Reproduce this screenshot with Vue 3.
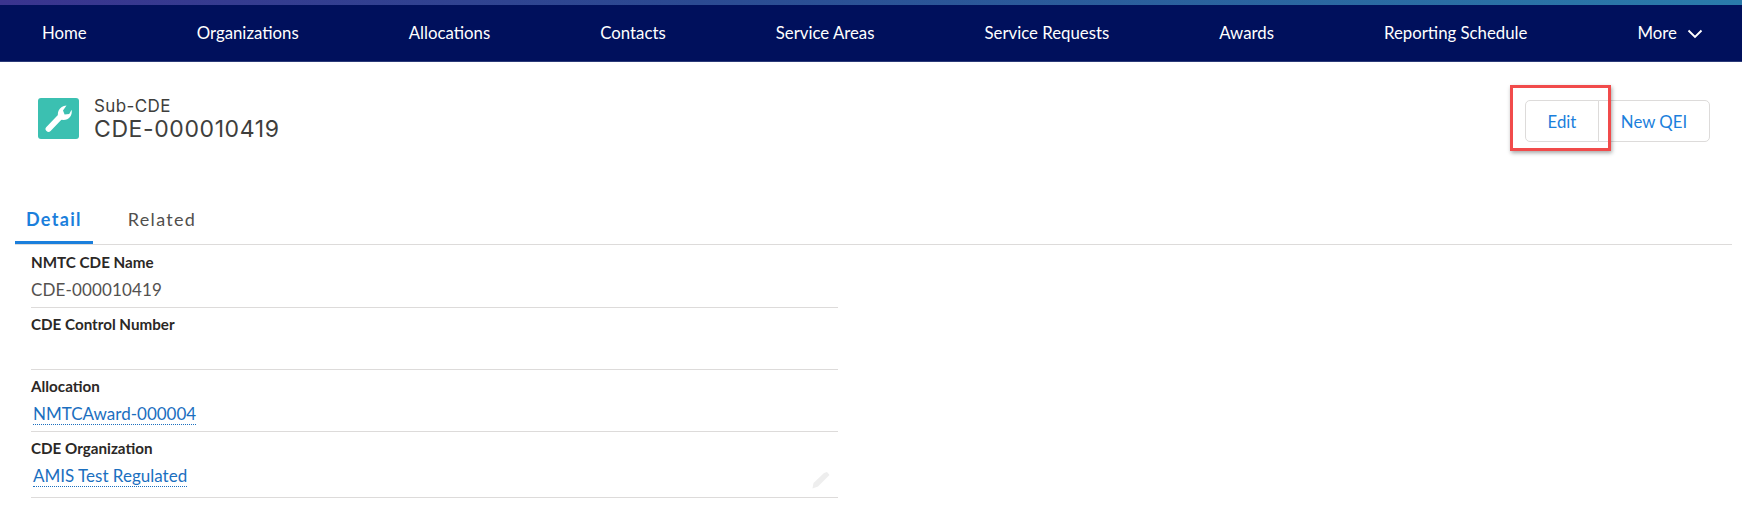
<script setup>
const navItems = ['Home', 'Organizations', 'Allocations', 'Contacts', 'Service Areas', 'Service Requests', 'Awards', 'Reporting Schedule']
const fields = [
  { label: 'NMTC CDE Name', value: 'CDE-000010419' },
  { label: 'CDE Control Number', value: '' },
  { label: 'Allocation', link: 'NMTCAward-000004' },
  { label: 'CDE Organization', link: 'AMIS Test Regulated', pencil: true },
]
</script>

<template>
  <div class="page">
    <div class="strip"></div>
    <nav class="nav">
      <a v-for="item in navItems" :key="item" class="nav-item">{{ item }}</a>
      <a class="nav-item more">
        More
        <svg class="chev" width="16" height="10" viewBox="0 0 16 10"><path d="M1.5 1.5 L8 8 L14.5 1.5" fill="none" stroke="#fff" stroke-width="1.9" /></svg>
      </a>
    </nav>

    <header class="head">
      <div class="title-wrap">
        <span class="icon">
          <svg width="41" height="41" viewBox="0 0 41 41">
            <path d="M10.5 31 L21.5 19.5" stroke="#fff" stroke-width="5.8" stroke-linecap="round" fill="none" />
            <path d="M21 21 C18 15 21 8.2 28.5 7.5 L25 12.5 L26.6 16.5 L31.2 16 L33.6 11.8 C35 19 28.5 24.5 21 21 Z" fill="#fff" />
          </svg>
        </span>
        <div class="titles">
          <div class="sub">Sub-CDE</div>
          <div class="name">CDE-000010419</div>
        </div>
      </div>
      <div class="btns">
        <button class="btn edit">Edit</button>
        <button class="btn qei">New QEI</button>
        <span class="callout"></span>
      </div>
    </header>

    <div class="tabs">
      <span class="tab active">Detail</span>
      <span class="tab">Related</span>
    </div>

    <section class="fields">
      <div v-for="f in fields" :key="f.label" class="field">
        <div class="label">{{ f.label }}</div>
        <div class="value">
          <a v-if="f.link" class="link">{{ f.link }}</a>
          <template v-else>{{ f.value }}</template>
        </div>
        <svg v-if="f.pencil" class="pencil" width="18" height="18" viewBox="0 0 18 18"><path d="M0.5 17.5 L1.5 12 L12 2 L15 1 L17.5 4 L6 15.5 Z" fill="#eeeeee" /></svg>
      </div>
    </section>
  </div>
</template>

<style scoped>
.page {
  width: 1742px;
  height: 514px;
  overflow: hidden;
  background: #fff;
  font-family: Lato, "Liberation Sans", sans-serif;
  color: #2b2826;
}
.strip {
  height: 5px;
  background: linear-gradient(90deg, #3a348f 0%, #2b4a92 40%, #2a7bab 100%);
}
.nav {
  height: 56px;
  padding: 0 39px 0 42px;
  display: flex;
  align-items: center;
  justify-content: space-between;
  background: #00105c;
  border-bottom: 1px solid #2b3a78;
}
.nav-item {
  color: #fff;
  font-size: 16.8px;
  line-height: 20px;
  margin-top: -1px;
  white-space: nowrap;
}
.more {
  display: flex;
  align-items: center;
  gap: 10px;
}
.chev {
  margin-top: 3px;
}
.head {
  display: flex;
  justify-content: space-between;
  align-items: flex-start;
  padding: 36px 32px 0 38px;
  height: 93px;
}
.title-wrap {
  display: flex;
  align-items: flex-start;
  gap: 15px;
}
.icon {
  width: 41px;
  height: 41px;
  border-radius: 3px;
  background: #3bc0b1;
  display: block;
}
.icon svg {
  display: block;
}
.sub {
  font-family: Inter, sans-serif;
  font-size: 17px;
  letter-spacing: 0.4px;
  line-height: 18px;
  margin-top: -1px;
  color: #3e3e3c;
}
.name {
  font-family: Inter, sans-serif;
  font-size: 23px;
  letter-spacing: 0.6px;
  line-height: 30px;
  margin-top: -1px;
  color: #3e3e3c;
}
.btns {
  position: relative;
  display: flex;
  margin-top: 2px;
}
.btn {
  font-family: inherit;
  font-size: 16.8px;
  color: #1b7fdc;
  background: #fff;
  border: 1px solid #dddbda;
  height: 42px;
  padding: 0;
}
.edit {
  width: 74px;
  border-radius: 5px 0 0 5px;
}
.qei {
  width: 112px;
  margin-left: -1px;
  border-radius: 0 5px 5px 0;
}
.callout {
  position: absolute;
  left: -15px;
  top: -15px;
  width: 101px;
  height: 66px;
  box-sizing: border-box;
  border: 3px solid #f14b4b;
  box-shadow: 1px 2px 4px rgba(0, 0, 0, 0.35);
}
.tabs {
  display: flex;
  margin: 0 10px 0 15px;
  height: 53px;
  border-bottom: 1px solid #dddbda;
}
.tab {
  height: 53px;
  box-sizing: border-box;
  padding: 15px 12px 0 11px;
  font-size: 18px;
  line-height: 26px;
  letter-spacing: 1.3px;
  color: #514f4d;
}
.tab.active {
  color: #1b7fdc;
  font-weight: 700;
  border-bottom: 3px solid #1b7fdc;
  padding-right: 11px;
  margin-right: 24px;
}
.fields {
  width: 807px;
  margin: 1px 0 0 31px;
}
.field {
  position: relative;
  height: 61px;
  border-bottom: 1px solid #dddbda;
}
.label {
  font-size: 15.2px;
  font-weight: 700;
  line-height: 20px;
  padding-top: 6px;
  color: #2b2826;
}
.value {
  font-size: 17px;
  letter-spacing: 0.15px;
  line-height: 22px;
  margin-top: 7px;
  color: #54514f;
}
.link {
  display: inline-block;
  margin-left: 2px;
  letter-spacing: 0;
  color: #1b6fbf;
  line-height: 20px;
  border-bottom: 1px dotted #1b6fbf;
}
.field:last-child {
  height: 65px;
}
.pencil {
  position: absolute;
  right: 8px;
  bottom: 8px;
}
</style>
